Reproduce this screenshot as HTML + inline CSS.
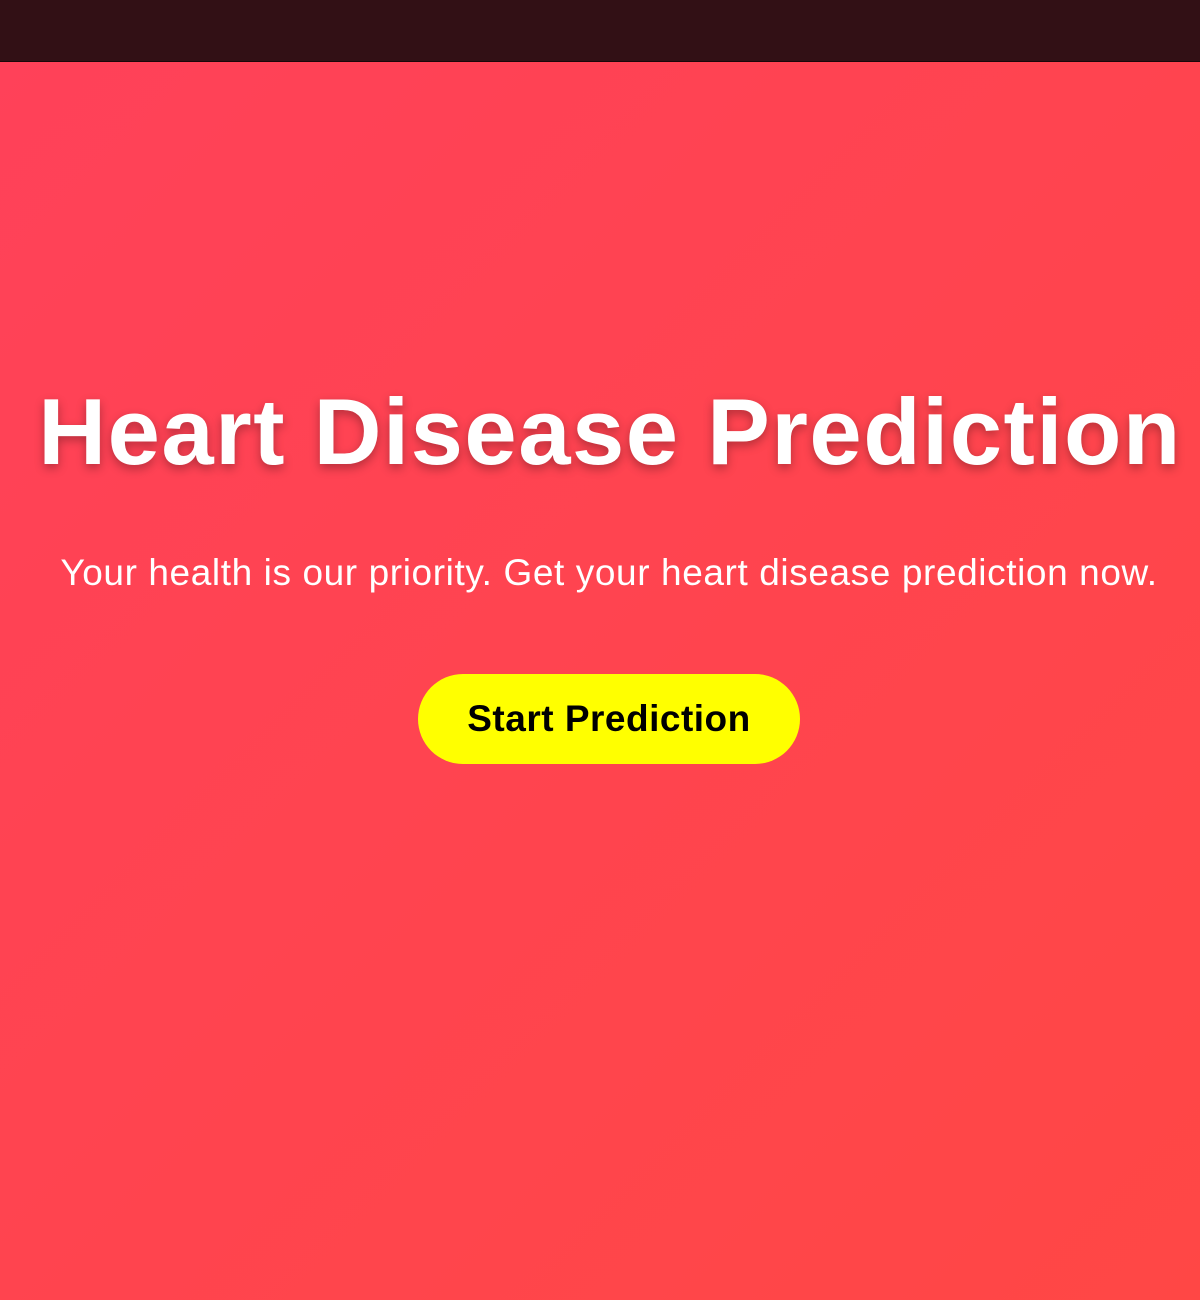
<!DOCTYPE html>
<html><head><style>
html,body{margin:0;padding:0;width:1200px;height:1300px;overflow:hidden;font-family:"Liberation Sans",Arial,sans-serif;}
.top{position:absolute;left:0;top:0;width:1200px;height:61px;background:#321015;border-bottom:1px solid #1a0709;}
.main{position:absolute;left:0;top:62px;width:1200px;height:1238px;background:linear-gradient(135deg,#ff4159 0%,#ff4745 100%);}
h1{position:absolute;left:0;width:1220px;top:372px;margin:0;text-align:center;color:#fff;font-size:94px;letter-spacing:1.5px;font-weight:bold;line-height:120px;text-shadow:0 4px 10px rgba(0,0,0,0.3);}
p{position:absolute;left:0;width:1218px;top:550px;margin:0;text-align:center;color:#fff;font-size:37px;letter-spacing:0.6px;line-height:46px;}
.btn{position:absolute;left:418px;top:674px;width:382px;height:90px;border-radius:45px;background:#ffff00;color:#000;font-weight:bold;font-size:37px;letter-spacing:0.5px;line-height:90px;text-align:center;}
</style></head><body>
<div class="top"></div>
<div class="main"></div>
<h1>Heart Disease Prediction</h1>
<p>Your health is our priority. Get your heart disease prediction now.</p>
<div class="btn">Start Prediction</div>
</body></html>
